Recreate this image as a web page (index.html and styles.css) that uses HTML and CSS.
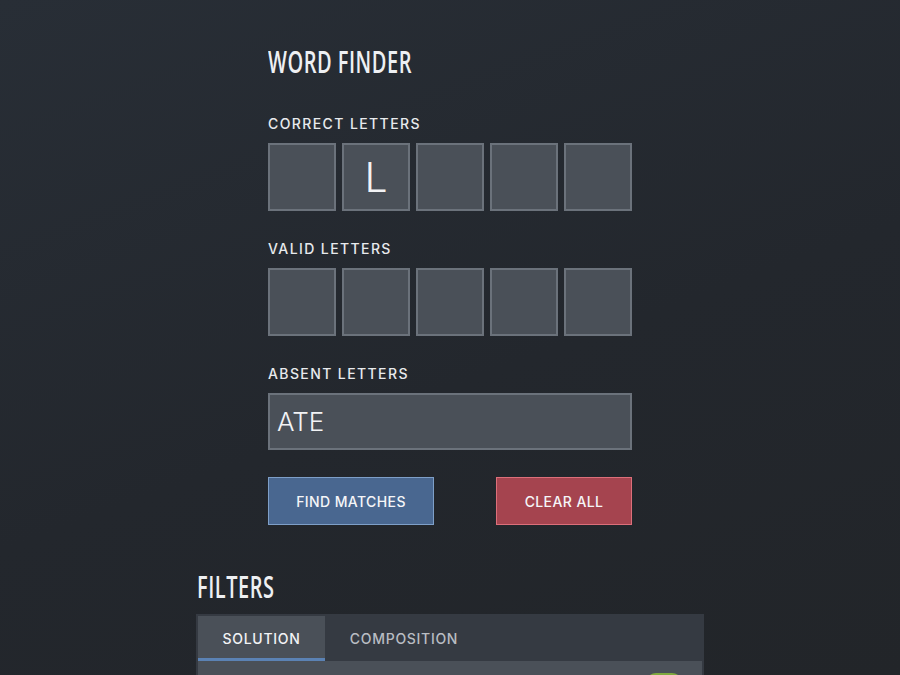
FILE: index.html
```html
<!DOCTYPE html>
<html lang="en">
<head>
<meta charset="utf-8">
<title>Word Finder</title>
<link rel="stylesheet" href="styles.css">
</head>
<body>
<main class="page">
  <section class="finder">
    <h1 class="title"><span class="title-text">WORD FINDER</span></h1>
    <div class="field">
      <div class="label">CORRECT LETTERS</div>
      <div class="boxes">
        <div class="box"></div>
        <div class="box">L</div>
        <div class="box"></div>
        <div class="box"></div>
        <div class="box"></div>
      </div>
    </div>
    <div class="field">
      <div class="label">VALID LETTERS</div>
      <div class="boxes">
        <div class="box"></div>
        <div class="box"></div>
        <div class="box"></div>
        <div class="box"></div>
        <div class="box"></div>
      </div>
    </div>
    <div class="field">
      <div class="label">ABSENT LETTERS</div>
      <div class="input">ATE</div>
    </div>
    <div class="actions">
      <button class="btn btn-blue">FIND MATCHES</button>
      <button class="btn btn-red">CLEAR ALL</button>
    </div>
  </section>
  <section class="filters">
    <h2 class="title"><span class="title-text">FILTERS</span></h2>
    <div class="panel">
      <div class="tabs">
        <div class="tab active">SOLUTION</div>
        <div class="tab">COMPOSITION</div>
      </div>
      <div class="panel-body">
        <div class="toggle"></div>
      </div>
    </div>
  </section>
</main>
</body>
</html>
```
FILE: styles.css
```css
html, body {
  margin: 0;
  height: 100%;
}
body {
  background: linear-gradient(160deg, #282e36 0%, #23272d 55%, #222529 100%);
  color: #f0f2f5;
  font-family: "Open Sans", "Noto Sans", sans-serif;
  overflow: hidden;
}
.page {
  width: 508px;
  margin: 0 auto;
  padding-top: 43px;
}
.finder {
  width: 364px;
  margin: 0 auto;
}
.title {
  margin: 0;
  font-family: "Open Sans", "Noto Sans", sans-serif;
  font-weight: 600;
  font-size: 31px;
  line-height: 36px;
  letter-spacing: 0.8px;
  color: #eef0f3;
}
.title-text {
  display: inline-block;
  transform: scaleX(0.645);
  transform-origin: left center;
}
.finder .title {
  margin-bottom: 36px;
}
.field {
  margin-bottom: 29px;
}
.label {
  font-family: "Inter", "Open Sans", sans-serif;
  font-size: 14px;
  font-weight: 500;
  letter-spacing: 1.4px;
  line-height: 17px;
  color: #e8eaed;
  margin-bottom: 11px;
}
.boxes {
  display: flex;
  gap: 6px;
}
.box {
  width: 64px;
  height: 64px;
  background: #4a5058;
  border: 2px solid #6b727b;
  display: flex;
  align-items: center;
  justify-content: center;
  font-family: "Inter", sans-serif;
  font-weight: 300;
  font-size: 41px;
  color: #f2f3f5;
}
.input {
  height: 53px;
  background: #4a5058;
  border: 2px solid #6b727b;
  display: flex;
  align-items: center;
  padding-left: 7px;
  font-family: "Inter", sans-serif;
  font-weight: 300;
  font-size: 26px;
  color: #f2f3f5;
}
.actions {
  display: flex;
  justify-content: space-between;
  margin-top: -2px;
}
.btn {
  height: 48px;
  font-family: "Inter", sans-serif;
  font-size: 14px;
  font-weight: 500;
  letter-spacing: 0.4px;
  color: #f5f6f8;
  cursor: pointer;
}
.btn-blue {
  width: 166px;
  background: #496790;
  border: 1px solid #7e9fc8;
}
.btn-red {
  width: 136px;
  background: #a5444f;
  border: 1px solid #dc6f7a;
}
.filters {
  margin-top: 43px;
}
.filters .title {
  margin-left: 1px;
  margin-bottom: 10px;
}
.panel {
  background: #353a42;
  padding: 2px 2px 0;
}
.tabs {
  display: flex;
}
.tab {
  width: 127px;
  height: 39px;
  padding-top: 3px;
  border-bottom: 3px solid transparent;
  display: flex;
  align-items: center;
  justify-content: center;
  font-family: "Inter", sans-serif;
  font-size: 14px;
  font-weight: 500;
  letter-spacing: 0.7px;
  color: #b9bdc3;
}
.tab + .tab {
  width: 158px;
}
.tab.active {
  background: #4a5058;
  border-bottom-color: #5b82b4;
  color: #f2f3f5;
}
.panel-body {
  background: #4a5058;
  height: 40px;
  position: relative;
}
.toggle {
  position: absolute;
  right: 20px;
  top: 12px;
  width: 36px;
  height: 20px;
  border-radius: 10px;
  background: #7fa93f;
}
```
